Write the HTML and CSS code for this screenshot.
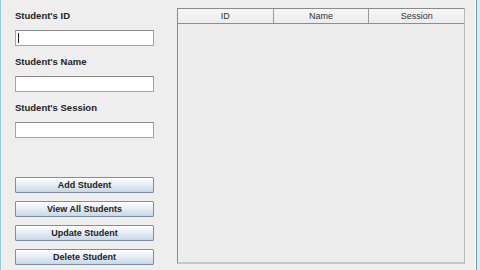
FILE: index.html
```html
<!DOCTYPE html>
<html lang="en">
<head>
    <meta charset="UTF-8">
    <title>Student Records</title>
    <link rel="stylesheet" href="styles.css">
</head>
<body>
    <div class="window">
        <div class="content">
            <div class="form">
                <label class="label">Student's ID</label>
                <div class="field"><span class="caret"></span></div>
                <label class="label">Student's Name</label>
                <div class="field"></div>
                <label class="label">Student's Session</label>
                <div class="field"></div>

                <div class="buttons">
                    <button class="button">Add Student</button>
                    <button class="button">View All Students</button>
                    <button class="button">Update Student</button>
                    <button class="button">Delete Student</button>
                </div>
            </div>

            <div class="table">
                <div class="table-head">
                    <div class="col">ID</div>
                    <div class="col">Name</div>
                    <div class="col">Session</div>
                </div>
                <div class="table-body"></div>
            </div>
        </div>
        <div class="edge"></div>
    </div>
</body>
</html>
```

FILE: styles.css
```css
body {
    margin: 0;
    background: #eeeeee;
    font-family: 'Liberation Sans', Arial, sans-serif;
}
.window {
    display: flex;
    height: 270px;
    border-left: 1px solid #9cc9d3;
    box-sizing: border-box;
}
.content {
    flex: 1;
    display: flex;
    padding: 8px 0 0 14px;
}
.form {
    width: 139px;
    display: flex;
    flex-direction: column;
}
.label {
    font-size: 9.5px;
    font-weight: bold;
    color: #222;
    line-height: 14px;
    margin-top: 1px;
}
.field {
    height: 16px;
    box-sizing: border-box;
    background: white;
    border: 1px solid #a4a4a4;
    border-top-color: #8a8a8a;
    margin: 7px 0 8px;
    position: relative;
}
.caret {
    position: absolute;
    left: 2px;
    top: 2px;
    width: 1px;
    height: 10px;
    background: #222;
}
.buttons {
    display: flex;
    flex-direction: column;
    gap: 8px;
    margin-top: 31px;
}
.button {
    height: 16px;
    padding: 0;
    border: 1px solid #7d8fa4;
    border-radius: 1px;
    background: linear-gradient(#ffffff, #dfe8f2 60%, #c8d7e8);
    font-family: 'Liberation Sans', Arial, sans-serif;
    font-size: 9px;
    font-weight: bold;
    color: #222;
}
.table {
    width: 288px;
    height: 256px;
    margin-left: 23px;
    box-sizing: border-box;
    border: 1px solid #8a8a8a;
    border-right-color: #b8b8b8;
    border-bottom: 2px solid #c4c8cf;
    display: flex;
    flex-direction: column;
    background: #ededed;
}
.table-head {
    display: flex;
    height: 14px;
    border-bottom: 1px solid #8d8d8d;
    background: linear-gradient(#f6f6f6, #ececec);
}
.col {
    flex: 1;
    text-align: center;
    font-size: 9px;
    line-height: 14px;
    color: #333;
    border-right: 1px solid #9a9a9a;
}
.col:last-child {
    border-right: none;
}
.table-body {
    flex: 1;
}
.edge {
    width: 4px;
    border-left: 1px solid #fafafa;
    background: linear-gradient(90deg, #6c9fa8 0 1px, #d6ecf2 1px);
}
```
